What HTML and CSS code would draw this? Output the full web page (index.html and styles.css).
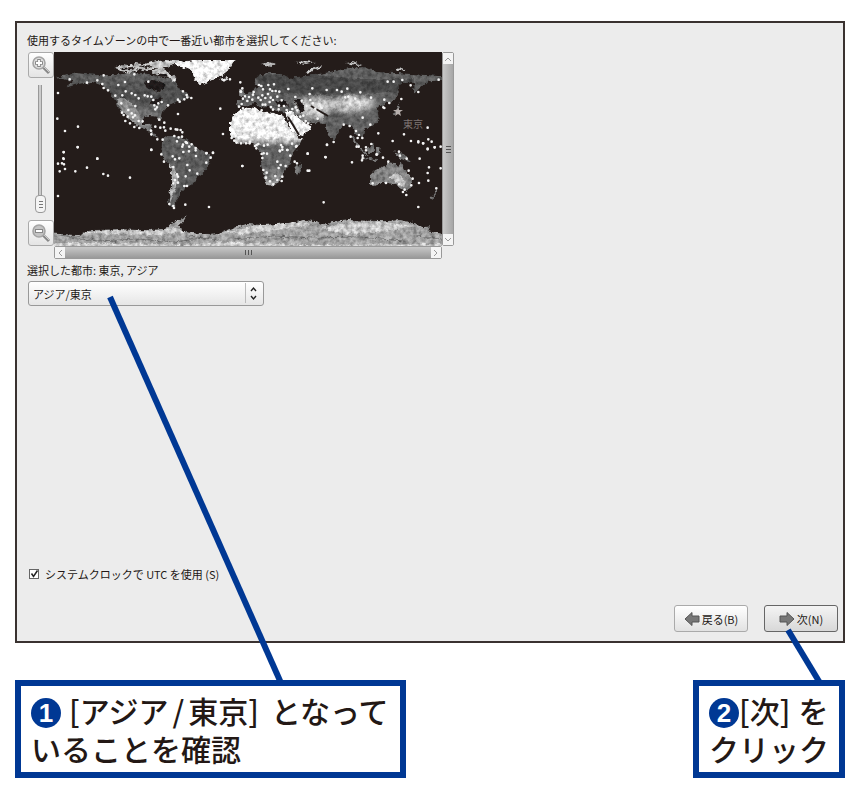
FILE: index.html
```html
<!DOCTYPE html>
<html lang="ja">
<head>
<meta charset="utf-8">
<title>タイムゾーンの選択</title>
<meta name="viewport" content="width=device-width, initial-scale=1">
<link rel="stylesheet" href="styles.css">
</head>
<body>
<main class="panel">
  <p class="prompt" id="prompt">使用するタイムゾーンの中で一番近い都市を選択してください:</p>
  <section class="picker" aria-labelledby="prompt">
    <div class="zoom">
      <button class="zoom-button" type="button" aria-label="拡大">
        <svg viewBox="0 0 20 20" width="20" height="20"><path d="M12 12l6 6" stroke="#888" stroke-width="3"/><path d="M13 12l5 5" stroke="#ccc" stroke-width="1"/><circle cx="8" cy="8" r="6" fill="#ddd" stroke="#a4a4a4" stroke-width="1.6"/><path d="M8 4v8M4 8h8" stroke="#888" stroke-width="3.6"/><path d="M8 5v6M5 8h6" stroke="#fff" stroke-width="1.8"/></svg>
      </button>
      <input class="zoom-slider" type="range" min="0" max="100" value="0" aria-label="ズーム">
      <button class="zoom-button" type="button" aria-label="縮小">
        <svg viewBox="0 0 20 20" width="20" height="20"><path d="M12 12l6 6" stroke="#888" stroke-width="3"/><path d="M13 12l5 5" stroke="#ccc" stroke-width="1"/><circle cx="8" cy="8" r="6" fill="#c4c4c4" stroke="#a4a4a4" stroke-width="1.6"/><path d="M4 8h8" stroke="#888" stroke-width="4"/><path d="M5 8h6" stroke="#fff" stroke-width="2"/></svg>
      </button>
    </div>
    <svg class="map" viewBox="55 52 388 194" role="img" aria-label="世界地図">
      <defs>
        <filter id="terrain" x="0" y="0" width="100%" height="100%">
          <feTurbulence type="fractalNoise" baseFrequency=".22" numOctaves="4" seed="8" result="n"/>
          <feDisplacementMap in="SourceGraphic" in2="n" scale="5" xChannelSelector="R" yChannelSelector="G" result="s"/>
          <feColorMatrix in="n" type="matrix" values="1.8 0 0 0 -.4  1.8 0 0 0 -.4  1.8 0 0 0 -.4  0 0 0 0 1" result="g"/>
          <feComposite in="s" in2="g" operator="arithmetic" k1=".8" k2=".5" result="m"/>
          <feComposite in="m" in2="s" operator="in"/>
        </filter>
        <filter id="soft" x="-20%" y="-20%" width="140%" height="140%"><feGaussianBlur stdDeviation="3"/></filter>
        <linearGradient id="africa" x1="0" y1="0" x2="0" y2="1"><stop offset="0" stop-color="#fff"/><stop offset=".38" stop-color="#f8f8f8"/><stop offset=".5" stop-color="#666"/><stop offset=".75" stop-color="#666"/><stop offset="1" stop-color="#aaa"/></linearGradient>
        <linearGradient id="namerica" x1="0" y1="0" x2="0" y2="1"><stop offset="0" stop-color="#666"/><stop offset=".4" stop-color="#505050"/><stop offset=".75" stop-color="#888"/><stop offset="1" stop-color="#777"/></linearGradient>
        <clipPath id="asia-clip"><path d="M238 106L239 100 247 99 244 95 252 91 260 87 255 83 258 77 268 73 280 73 290 78 315 75 335 71 350 68 365 67 378 72 400 73 442 76 442 80 428 82 421 88 416 93 413 88 416 83 402 83 398 87 400 92 396 100 388 103 378 108 380 119 375 125 365 129 364 138 358 135 352 126 345 124 340 130 335 141 330 135 326 124 313 123 303 121 297 115 286 113 280 111 272 110 270 106 262 107 256 103 248 106Z"/></clipPath>
      </defs>
      <rect x="55" y="52" width="388" height="194" fill="#241c1a"/>
      <g filter="url(#terrain)">
        <path fill="url(#namerica)" d="M56 78L68 75 78 73 100 75 115 75 135 72 150 74 165 78 176 80 180 88 188 93 192 98 180 101 170 105 163 112 161 122 158 117 150 116 144 118 144 125 149 125 153 123 152 130 160 138 155 137 147 129 138 126 130 119 124 113 118 107 115 98 110 92 102 85 94 82 80 84 66 88 75 81 62 79Z"/>
        <path fill="#999" d="M117 100L125 97 133 103 140 113 143 124 135 123 125 113Z"/>
        <path fill="#241c1a" d="M145 83L154 79 166 85 162 92 156 91 148 87ZM164 98L155 99 150 103 158 105Z"/>
        <path fill="#ccc" d="M115 68l8-3 8 1 5-3 9 1 11-3 12-1 14 1-12 5-9 4-8-1-6 2-7-2-9 4-10-2zM152 71l13-2 14 9-4 3-7-4-13-2z"/>
        <path fill="#241c1a" d="M122 68l12-1 3 1-13 2zM138 66l16-1-6 3zM157 73l9 1 6 4-8-2z"/>
        <path fill="#fff" stroke="#fff" stroke-width="2" d="M176 63L195 61 216 61 234 61 228 70 221 76 208 81 201 84 197 80 193 70 186 67Z"/>
        <path fill="#ccc" d="M221 79l7-2 3 2-7 3zM261 64l9-2 8 2-7 2zM295 62l12-1 11 1-11 2zM305 72l8-4 10-2-1 2-9 3-3 3zM346 63l7-1 10 3-3 1zM395 69l8-1 4 2-8 1z"/>
        <path fill="#606060" d="M163 140L168 136 176 136 186 139 194 144 200 149 207 152 213 157 210 164 205 172 199 176 196 183 188 187 183 191 179 198 176 203 177 208 170 206 169 200 173 190 173 178 172 167 166 160 162 154Z"/>
        <path fill="#bbb" d="M171 165l4 2 3 8 1 7-3 9-5 12-1-8 3-14z"/>
        <g clip-path="url(#asia-clip)">
          <path fill="#646464" d="M230 60h214v90H230z"/>
          <path fill="#4d4d4d" d="M256 76l40-3 60 6 60 0v10l-55 6-50 0-45-3z"/>
          <g filter="url(#soft)" fill="#ddd"><path d="M297 102l24-4 16 3 12-6 20 3 10 3-11 9-22 2-10-4-9 3 2 9-28-4z"/></g>
          <path fill="#666" d="M325 113l17 5 7 5 15-7 13-4 5 14-15 11-12-10-17 1-5 17-9-15z"/>
          <path fill="#241c1a" d="M296 99l6 0 4 12-5 1-3-7zM276 101l10 0 4 5-10 1z"/>
        </g>
        <path fill="url(#africa)" d="M231 122L234 115 241 110 250 107 257 108 262 112 270 112 282 115 286 118 291 129 298 137 304 138 301 145 293 155 291 165 285 172 281 180 275 186 268 185 264 175 262 165 263 155 258 148 255 144 245 144 237 143 231 135Z"/>
        <path fill="#fff" d="M286 112L293 112 302 120 306 122 313 125 310 131 297 137 291 128Z"/>
        <path fill="#777" d="M297 174l-1-5 6-7 0 6-4 9zM352 133l10 15 8 8-4-1-14-17zM367 150l8-7 0 8-5 3zM364 157l15 2-1 2-14-2zM377 148l5-1-2 9-3-3zM395 151l10 3 8 8-12-3zM431 198l5-5 1-5 2 4-6 7zM393 114l5-3 1-9 2 6-5 8zM240 89l4-2 2 9-6 1zM222 93h2z"/>
        <path fill="#8a8a8a" d="M371 175L376 170 385 166 390 162 396 163 399 167 402 162 405 170 412 176 413 184 408 191 402 189 394 184 385 183 376 186 371 184Z"/>
        <path fill="#ccc" d="M390 176l8-3 9 8-2 6-7-4z"/>
        <path fill="#aaa" d="M50 233L80 235 92 230 120 229 145 230 167 229 171 224 180 220 188 216 184 222 180 226 187 232 203 234 220 233 230 229 247 224 270 225 290 223 305 220 318 221 324 225 333 222 350 220 385 221 402 220 415 223 424 227 431 226 428 231 445 234V250H50Z"/>
        <g fill="#d4d4d4"><path d="M82 233l28-3 37 1 30-3 10 4-27 3-44-1zM225 232l28-6 45-4 18 2-30 5-42 5zM320 229l20-6 45-1 30 4-40 7-30 1zM55 243h70l60 2 40-3 80 3 138-1v3H55z"/></g>
        <path fill="none" stroke="#777" d="M70 238l30 3 40-2 35 3 35-5M235 240l40-4 40 2 45-1 45 4M417 236l26 3M60 235l25 3M190 236l30 4"/>
      </g>
      <path d="M289 117l5 8 6 10M312 106l17 10" fill="none" stroke="#241c1a" stroke-width="2"/>
      <g class="cities">
        <g transform="translate(16 20) scale(.3333)">
          <path d="M164 178h0M216 188h0M247 181h0M266 166h0M262 192h0M266 204h0M279 211h0M301 227h0M322 226h0M310 195h0M330 186h0M332 214h0M350 220h0M361 225h0M371 235h0M389 226h0M398 229h0M409 230h0M415 240h0M418 256h0M421 268h0M426 262h0M440 246h0M430 250h0M459 256h0M358 163h0M400 185h0M478 181h0M504 214h0M515 225h0M489 239h0M494 245h0M508 238h0M517 232h0M529 234h0M489 282h0M319 250h0M321 278h0M326 285h0M338 290h0M331 303h0M345 310h0M354 292h0M360 286h0M350 280h0M340 270h0M361 258h0M371 303h0M383 304h0M358 321h0M373 324h0M127 296h0M129 219h0M150 333h0M189 320h0M188 382h0M146 397h0M145 415h0M247 416h0M433 299h0M448 308h0M447 322h0M467 326h0M482 328h0M451 332h0M436 323h0M408 332h0M409 343h0M427 358h0M443 359h0M487 329h0M497 330h0M502 337h0M501 350h0M491 352h0M478 348h0M421 320h0M514 368h0M523 380h0M542 384h0M504 374h0M409 390h0M574 400h0M594 399h0M616 266h0M624 342h0M627 181h0M645 178h0M677 215h0M684 236h0M672 260h0M650 354h0M658 362h0M688 344h0"/>
        </g>
        <g transform="translate(230 20) scale(.3333)">
          <path d="M34 187h0M40 205h0M36 215h0M48 229h0M60 231h0M55 243h0M72 224h0M70 239h0M74 216h0M90 195h0M97 198h0M102 208h0M100 226h0M88 233h0M95 240h0M109 234h0M117 222h0M123 208h0M135 193h0M118 195h0M130 213h0M140 213h0M125 233h0M122 246h0M109 254h0M126 261h0M101 254h0M98 271h0M132 240h0M145 230h0M151 215h0M158 241h0M150 257h0M149 268h0M165 258h0M173 270h0M132 269h0M132 282h0M42 265h0M26 282h0M38 252h0M72 273h0M89 282h0M114 279h0M178 207h0M199 231h0M218 242h0M242 222h0M250 205h0M190 267h0M205 271h0M200 262h0M223 287h0M230 303h0M237 310h0M214 290h0M244 240h0M252 250h0M259 266h0M278 264h0M266 296h0M293 210h0M324 210h0M338 215h0M355 206h0M394 217h0M349 232h0M358 230h0M379 236h0M426 233h0M476 185h0M494 185h0M520 180h0M545 196h0M568 216h0M629 179h0M517 237h0M466 239h0M466 264h0M481 249h0M463 262h0M401 293h0M424 314h0M344 314h0M314 366h0M294 375h0M236 401h0M220 344h0M201 380h0M179 358h0M189 371h0M362 318h0M381 333h0M390 345h0M400 354h0M386 354h0M365 350h0M411 382h0M427 372h0M389 380h0M443 404h0M401 415h0M491 363h0M525 343h0M546 363h0M568 367h0M582 370h0M598 358h0M608 365h0M596 386h0M617 382h0M596 323h0M448 340h0M23 368h0M36 370h0M51 370h0M62 370h0M78 378h0M88 372h0M105 377h0M98 402h0M114 401h0M156 375h0M152 392h0M160 381h0M175 390h0M289 411h0"/>
        </g>
        <g transform="translate(16 140) scale(.3333)">
          <path d="M188 21h0M146 36h0M146 57h0M141 70h0M147 73h0M129 71h0M150 87h0M134 94h0M181 94h0M216 83h0M247 56h0M265 102h0M279 107h0M345 113h0M129 168h0M409 29h0M439 43h0M447 65h0M473 49h0M480 58h0M493 55h0M486 4h0M502 20h0M512 6h0M516 9h0M530 13h0M505 36h0M522 34h0M542 31h0M543 48h0M575 39h0M594 38h0M587 53h0M574 68h0M517 75h0M524 91h0M547 101h0M512 109h0M475 81h0M486 103h0M489 110h0M480 120h0M475 130h0M489 128h0M508 138h0M516 138h0M463 192h0M475 198h0M477 204h0M511 194h0M582 201h0M682 78h0"/>
        </g>
        <g transform="translate(230 140) scale(.3333)">
          <path d="M40 78h0M63 5h0M83 15h0M104 40h0M100 54h0M82 25h0M116 14h0M153 34h0M160 29h0M175 30h0M184 47h0M203 18h0M145 65h0M155 75h0M149 84h0M170 78h0M103 90h0M113 98h0M111 113h0M123 124h0M139 108h0M160 110h0M158 123h0M133 133h0M145 120h0M197 65h0M204 70h0M236 92h0M241 92h0M236 41h0M290 52h0M294 14h0M284 187h0M369 67h0M399 61h0M401 47h0M411 31h0M383 20h0M443 43h0M510 35h0M513 47h0M533 56h0M572 56h0M462 53h0M478 65h0M600 82h0M596 99h0M598 122h0M539 92h0M570 129h0M551 116h0M547 136h0M527 149h0M522 156h0M532 165h0M510 133h0M471 129h0M431 130h0M568 201h0M622 145h0M635 85h0M635 20h0M617 22h0M596 28h0M583 10h0M568 4h0"/>
        </g>
      </g>
      <path fill="#b8b0ae" d="M399 107l1 3h4l-3 2 1 4-3-2-3 2 1-4-3-2h4z"/>
      <text class="map-label" x="404" y="128">東京</text>
    </svg>
    <div class="scroll scroll-v"><button type="button" aria-label="上へ"><svg viewBox="0 0 10 10"><path d="M2 7l3-3 3 3"/></svg></button><span class="grip"></span><button type="button" aria-label="下へ"><svg viewBox="0 0 10 10"><path d="M2 3l3 3 3-3"/></svg></button></div>
    <div class="scroll scroll-h"><button type="button" aria-label="左へ"><svg viewBox="0 0 10 10"><path d="M7 2L4 5l3 3"/></svg></button><span class="grip"></span><button type="button" aria-label="右へ"><svg viewBox="0 0 10 10"><path d="M3 2l3 3-3 3"/></svg></button></div>
  </section>
  <label class="selected" for="city">選択した都市: 東京, アジア</label>
  <div class="combo">
    <select id="city"><option>アジア/東京</option></select>
    <svg class="combo-arrows" viewBox="0 0 18 24" width="18" height="24"><path d="M.5 2v20" stroke="#bbb"/><path d="M6 10l2.500-3 2.500 3M6 15l2.500 3 2.500-3" fill="none" stroke="#222" stroke-width="1.4"/></svg>
  </div>
  <label class="utc"><span class="tick"><input type="checkbox" checked><svg viewBox="0 0 10 10" width="10" height="10"><path d="M2.500 4.500l2 3 4-6"/></svg></span>システムクロックで UTC を使用 (S)</label>
  <div class="actions">
    <button class="action" type="button"><svg viewBox="0 0 16 16" width="16" height="16"><path d="M1 8l7-6.500v3.500h7v6H8v3.500z" fill="#777" stroke="#555"/></svg>戻る(B)</button>
    <button class="action action-default" type="button"><svg viewBox="0 0 16 16" width="16" height="16"><path d="M15 8L8 1.500v3.500H1v6h7v3.500z" fill="#777" stroke="#555"/></svg>次(N)</button>
  </div>
</main>
<div class="notes">
  <aside class="note note-city">
    <svg class="pointer pointer-city" viewBox="0 0 180 388" width="180" height="388"><path d="M5 2L176 388"/></svg>
    <span class="number">1</span><span class="key">[アジア<span class="slash">/</span>東京]</span>となって<br>いることを確認
  </aside>
  <aside class="note">
    <svg class="pointer pointer-next" viewBox="0 0 46 56" width="46" height="56"><path d="M5 3L37 56"/></svg>
    <span class="number">2</span><span class="key-short">[次]</span>を<br>クリック
  </aside>
</div>
</body>
</html>
```
FILE: styles.css
```css
* { box-sizing: border-box; }

body {
  display: flex;
  flex-direction: column;
  gap: 37px;
  min-height: 100vh;
  margin: 0;
  padding: 21px 15px 22px;
  background: #fff;
  color: #231815;
  font-family: "Noto Sans CJK JP", sans-serif;
  font-size: 11px;
  line-height: 16px;
}

button, select { color: inherit; font: inherit; }
svg { display: block; }

.panel {
  flex: 1;
  display: flex;
  flex-direction: column;
  align-items: flex-start;
  padding: 9px 5px 9px 10px;
  border: 2px solid #3a3230;
  background: #ececec;
}

.prompt { margin: 0 0 4px; }

.picker {
  display: grid;
  grid-template-columns: 27px minmax(0, 388px) 12px;
  grid-template-rows: auto 13px;
  max-width: 100%;
}

.zoom {
  display: flex;
  flex-direction: column;
  align-items: center;
  justify-content: space-between;
}

.zoom-button {
  display: grid;
  place-items: center;
  width: 26px;
  height: 26px;
  padding: 0;
  border: 1px solid #aaa;
  border-radius: 3px;
  background: linear-gradient(#fff, #e4e4e4);
}

.zoom-slider {
  appearance: none;
  writing-mode: vertical-lr;
  direction: rtl;
  width: 11px;
  height: 128px;
  margin: 0;
  background: linear-gradient(90deg, transparent 3px, #999 3px 4px, #ccc 4px 6px, #999 6px 7px, transparent 7px);
}

.zoom-slider::-webkit-slider-thumb {
  appearance: none;
  width: 11px;
  height: 18px;
  border: 1px solid #999;
  border-radius: 4px;
  background: linear-gradient(#777, #777) 3px 5px / 4px 1px no-repeat, linear-gradient(#777, #777) 3px 8px / 4px 1px no-repeat, linear-gradient(#777, #777) 3px 11px / 4px 1px no-repeat, #f4f4f4;
}

.map { width: 100%; height: auto; }
.cities { fill: none; stroke: #f4f4f4; stroke-width: 8; stroke-linecap: square; }
.cities path { stroke-linecap: round; }
.map-label { fill: #7d7472; font-size: 10px; }

.scroll {
  display: flex;
  align-items: stretch;
  justify-content: space-between;
  border: 1px solid #999;
  border-radius: 2px;
}

.scroll-v { flex-direction: column; background: linear-gradient(90deg, #c8c8c8, #a6a6a6); }
.scroll-h { grid-column: 2; background: linear-gradient(#c8c8c8, #999); }

.scroll button {
  display: grid;
  place-items: center;
  width: 10px;
  height: 11px;
  padding: 0;
  border: 0;
  background: #f4f4f4;
}

.scroll svg { width: 10px; height: 10px; fill: none; stroke: #999; }
.grip { align-self: center; width: 7px; height: 5px; }
.scroll-v .grip { width: 5px; height: 7px; background: repeating-linear-gradient(#555 0 1px, transparent 1px 3px); }
.scroll-h .grip { background: repeating-linear-gradient(90deg, #555 0 1px, transparent 1px 3px); }

.selected { margin: 3px 0; }
.combo { position: relative; width: 236px; max-width: 100%; margin-left: 1px; }

.combo select {
  appearance: none;
  display: block;
  width: 100%;
  height: 25px;
  padding: 0 24px 0 4px;
  border: 1px solid #999;
  border-radius: 3px;
  background: linear-gradient(#fff, #e6e6e6);
}

.combo-arrows { position: absolute; top: 0; right: 1px; pointer-events: none; }

.utc {
  display: flex;
  align-items: center;
  gap: 6px;
  margin: auto 0 23px 2px;
}

.tick { position: relative; }

.tick input {
  appearance: none;
  display: block;
  width: 10px;
  height: 10px;
  margin: 0;
  border: 1px solid #666;
  background: #fff;
}

.tick svg {
  position: absolute;
  inset: 0;
  visibility: hidden;
  fill: none;
  stroke: #222;
  stroke-width: 1.5;
  pointer-events: none;
}

.tick input:checked + svg { visibility: visible; }

.actions { display: flex; gap: 16px; align-self: flex-end; }

.action {
  display: flex;
  align-items: center;
  justify-content: center;
  gap: 2px;
  width: 74px;
  height: 27px;
  padding: 0;
  border: 1px solid #aaa;
  border-radius: 3px;
  background: linear-gradient(#fff, #e2e2e2);
}

.action-default { border-color: #666; background: linear-gradient(#f4f4f4, #d8d8d8); }

.notes { display: flex; justify-content: space-between; align-items: flex-start; }

.note {
  position: relative;
  padding: 5px 10px;
  border: 6px solid #003894;
  background: #fff;
  font-size: 30px;
  font-weight: 500;
  line-height: 38px;
}

.note-city { padding-right: 12px; }
.key { margin: 0 12px 0 8px; }
.key-short { margin-right: 8px; }
.slash { margin: 0 4px; }

.number {
  display: inline-block;
  width: 30px;
  height: 30px;
  border-radius: 50%;
  background: #003894;
  color: #fff;
  font-family: "Liberation Sans", sans-serif;
  font-size: 26px;
  font-weight: 700;
  line-height: 30px;
  text-align: center;
  vertical-align: 1px;
}

.pointer { position: absolute; bottom: calc(100% + 3px); overflow: visible; fill: none; stroke: #003894; stroke-width: 6; }
.pointer-city { left: 84px; }
.pointer-next { right: 10px; }
```
